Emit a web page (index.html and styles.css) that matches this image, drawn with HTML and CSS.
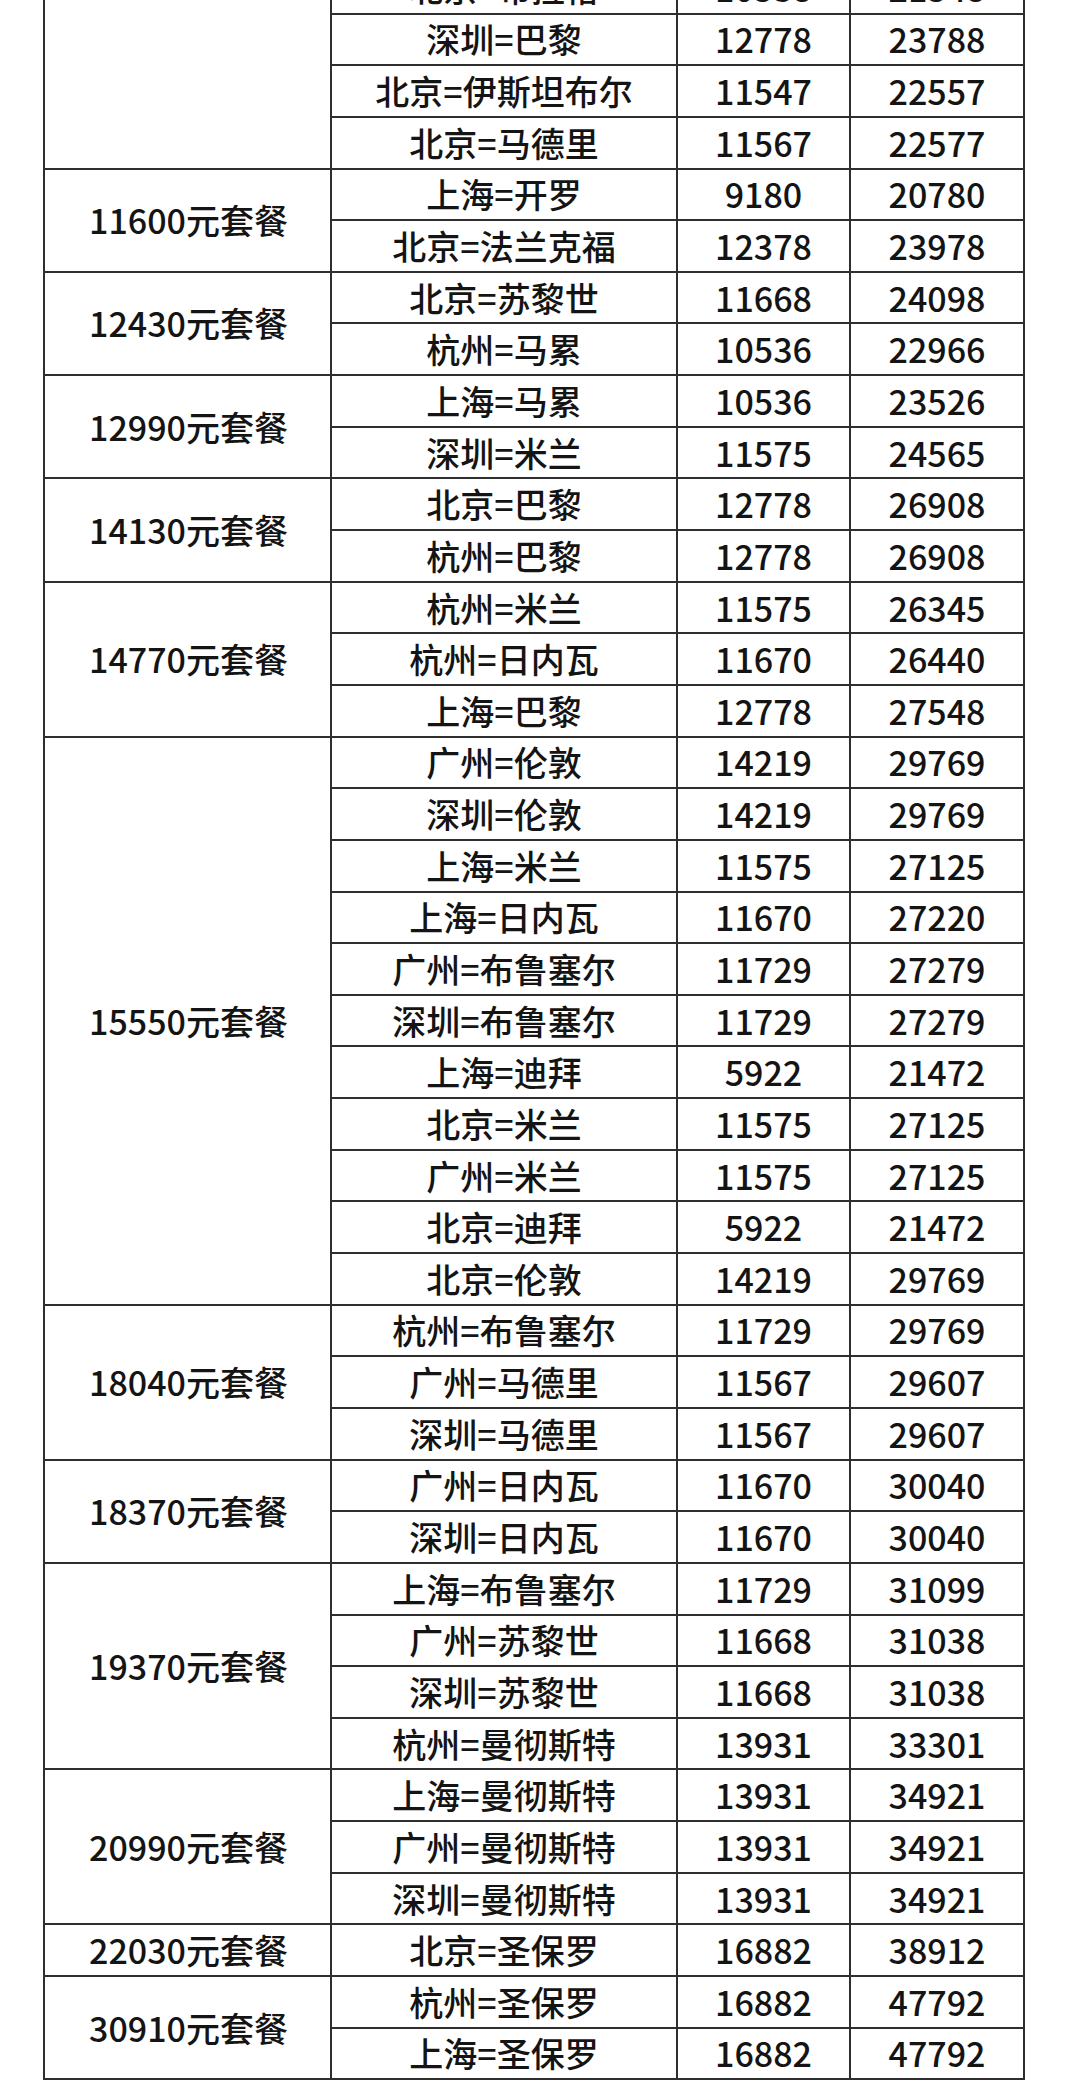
FILE: index.html
```html
<!DOCTYPE html>
<html lang="zh-CN">
<head>
<meta charset="utf-8">
<title>套餐价格表</title>
<link rel="stylesheet" href="styles.css">
</head>
<body>
<div class="sheet">
<table class="price">
<colgroup><col class="c1"><col class="c2"><col class="c3"><col class="c4"></colgroup>
<tbody>
<tr><td class="pkg" rowspan="4"></td><td>北京=布拉格</td><td>10538</td><td>21548</td></tr>
<tr><td>深圳=巴黎</td><td>12778</td><td>23788</td></tr>
<tr><td>北京=伊斯坦布尔</td><td>11547</td><td>22557</td></tr>
<tr><td>北京=马德里</td><td>11567</td><td>22577</td></tr>

<tr><td class="pkg" rowspan="2">11600元套餐</td><td>上海=开罗</td><td>9180</td><td>20780</td></tr>
<tr><td>北京=法兰克福</td><td>12378</td><td>23978</td></tr>

<tr><td class="pkg" rowspan="2">12430元套餐</td><td>北京=苏黎世</td><td>11668</td><td>24098</td></tr>
<tr><td>杭州=马累</td><td>10536</td><td>22966</td></tr>

<tr><td class="pkg" rowspan="2">12990元套餐</td><td>上海=马累</td><td>10536</td><td>23526</td></tr>
<tr><td>深圳=米兰</td><td>11575</td><td>24565</td></tr>

<tr><td class="pkg" rowspan="2">14130元套餐</td><td>北京=巴黎</td><td>12778</td><td>26908</td></tr>
<tr><td>杭州=巴黎</td><td>12778</td><td>26908</td></tr>

<tr><td class="pkg" rowspan="3">14770元套餐</td><td>杭州=米兰</td><td>11575</td><td>26345</td></tr>
<tr><td>杭州=日内瓦</td><td>11670</td><td>26440</td></tr>
<tr><td>上海=巴黎</td><td>12778</td><td>27548</td></tr>

<tr><td class="pkg" rowspan="11">15550元套餐</td><td>广州=伦敦</td><td>14219</td><td>29769</td></tr>
<tr><td>深圳=伦敦</td><td>14219</td><td>29769</td></tr>
<tr><td>上海=米兰</td><td>11575</td><td>27125</td></tr>
<tr><td>上海=日内瓦</td><td>11670</td><td>27220</td></tr>
<tr><td>广州=布鲁塞尔</td><td>11729</td><td>27279</td></tr>
<tr><td>深圳=布鲁塞尔</td><td>11729</td><td>27279</td></tr>
<tr><td>上海=迪拜</td><td>5922</td><td>21472</td></tr>
<tr><td>北京=米兰</td><td>11575</td><td>27125</td></tr>
<tr><td>广州=米兰</td><td>11575</td><td>27125</td></tr>
<tr><td>北京=迪拜</td><td>5922</td><td>21472</td></tr>
<tr><td>北京=伦敦</td><td>14219</td><td>29769</td></tr>

<tr><td class="pkg" rowspan="3">18040元套餐</td><td>杭州=布鲁塞尔</td><td>11729</td><td>29769</td></tr>
<tr><td>广州=马德里</td><td>11567</td><td>29607</td></tr>
<tr><td>深圳=马德里</td><td>11567</td><td>29607</td></tr>

<tr><td class="pkg" rowspan="2">18370元套餐</td><td>广州=日内瓦</td><td>11670</td><td>30040</td></tr>
<tr><td>深圳=日内瓦</td><td>11670</td><td>30040</td></tr>

<tr><td class="pkg" rowspan="4">19370元套餐</td><td>上海=布鲁塞尔</td><td>11729</td><td>31099</td></tr>
<tr><td>广州=苏黎世</td><td>11668</td><td>31038</td></tr>
<tr><td>深圳=苏黎世</td><td>11668</td><td>31038</td></tr>
<tr><td>杭州=曼彻斯特</td><td>13931</td><td>33301</td></tr>

<tr><td class="pkg" rowspan="3">20990元套餐</td><td>上海=曼彻斯特</td><td>13931</td><td>34921</td></tr>
<tr><td>广州=曼彻斯特</td><td>13931</td><td>34921</td></tr>
<tr><td>深圳=曼彻斯特</td><td>13931</td><td>34921</td></tr>

<tr><td class="pkg" rowspan="1">22030元套餐</td><td>北京=圣保罗</td><td>16882</td><td>38912</td></tr>

<tr><td class="pkg" rowspan="2">30910元套餐</td><td>杭州=圣保罗</td><td>16882</td><td>47792</td></tr>
<tr><td>上海=圣保罗</td><td>16882</td><td>47792</td></tr>
</tbody>
</table>
</div>
</body>
</html>
```

FILE: styles.css
```css
html, body {
  margin: 0;
  padding: 0;
  background: #ffffff;
}

.sheet {
  width: 1080px;
  height: 2094px;
  overflow: hidden;
  padding-left: 43px;
  box-sizing: border-box;
}

.price {
  margin-top: -39px;
  border-collapse: collapse;
  table-layout: fixed;
  width: 980px;
  font-family: "Noto Sans CJK SC", "Noto Sans", sans-serif;
  font-size: 34px;
  font-weight: 500;
  color: #141414;
}

.c1 { width: 287px; }
.c2 { width: 346px; }
.c3 { width: 173px; }
.c4 { width: 174px; }

.price td {
  border: 2px solid #2e2e2e;
  height: 51.65px;
  padding: 0;
  text-align: center;
  vertical-align: middle;
  line-height: 1;
  white-space: nowrap;
  box-sizing: border-box;
}

.price td.pkg {
  padding-left: 2px;
}
```
